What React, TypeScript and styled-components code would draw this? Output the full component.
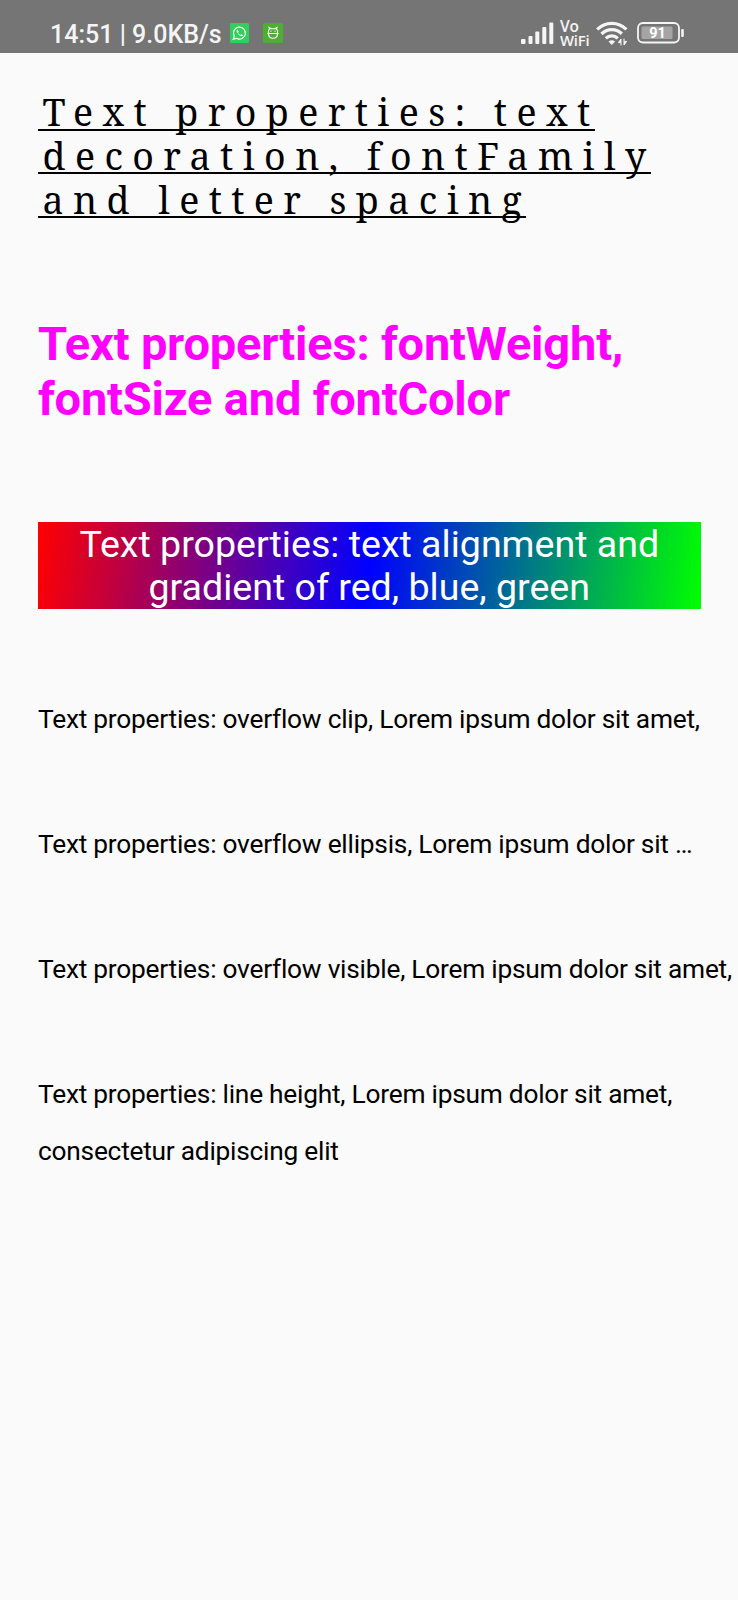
import React from "react";
import styled, { createGlobalStyle } from "styled-components";

const Global = createGlobalStyle`
  * { box-sizing: border-box; }
  body { margin: 0; background: #fafafa; }
`;
const Screen = styled.div`
  min-height: 1600px; width: 738px; overflow: hidden; background: #fafafa; color: #000;
  font-family: Roboto, sans-serif; display: flex; flex-direction: column;
`;
const StatusBar = styled.header`
  height: 53px; background: #757575; color: #f5f5f5; display: flex; align-items: center;
  justify-content: space-between; padding: 13px 54px 0 50px;
`;
const StatusGroup = styled.div<{ $gap: number }>`
  display: flex; align-items: center; gap: ${(p) => p.$gap}px;
`;
const Clock = styled.span`
  font-size: 25px; font-weight: 500; line-height: 30px; padding-top: 3px; margin-right: -6px;
`;
const Network = styled.span`
  display: flex; flex-direction: column; font-family: "Open Sans", sans-serif;
  font-size: 14.8px; line-height: 14px; font-weight: 600; width: 29px; white-space: nowrap;
  letter-spacing: -0.2px;
`;
const NetworkTop = styled.span`
  font-size: 15.5px;
`;
const Content = styled.main`
  padding: 0 37.5px 0 38px; display: flex; flex-direction: column;
`;
const Serif = styled.p`
  margin: 37.4px 0 0; font-family: "Noto Serif", "Liberation Serif", serif; font-size: 37.5px;
  line-height: 43.7px; letter-spacing: 9.4px; display: flex; flex-direction: column; align-items: flex-start;
`;
const UnderlinedLine = styled.span`
  display: block; height: 43.7px; padding-left: 4.5px; margin-right: -4.7px; white-space: nowrap;
  background: linear-gradient(#000, #000) 0 38.3px / calc(100% - 4.7px) 2px no-repeat;
`;
const Bold = styled.p`
  margin: 94.6px 0 0; color: #f0f; font-weight: 700; font-size: 47px; line-height: 55.4px;
  letter-spacing: -0.2px;
`;
const Gradient = styled.p`
  margin: 94.7px 0 0; height: 87px; padding-top: 1.2px; color: #fff; text-align: center; font-size: 37.55px; line-height: 43.7px;
  background: linear-gradient(97.5deg, #f00, #00f, #0f0);
`;
const Body = styled.p<{ $leading?: number; $top?: number }>`
  margin: ${(p) => p.$top ?? 94.2}px 0 0; font-size: 26.3px; line-height: ${(p) => p.$leading ?? 31}px;
  letter-spacing: -0.24px; white-space: nowrap;
`;

const WhatsAppBadge = () => (
  <svg width="19" height="20" viewBox="0 0 19 20">
    <rect width="19" height="20" rx="1.5" fill="#2fd159" />
    <path d="M3.300 16.200l.9-3.200a6 6 0 1 1 2.300 2.300z" fill="none" stroke="#fff" strokeWidth="1.2" />
    <path d="M7.200 6.600c-1.300 1 0 3.400 1.400 4.800s3.600 2.500 4.600 1.100l-1.900-1.300-1 .7c-1-.5-1.900-1.400-2.300-2.400l.6-1z" fill="#fff" />
  </svg>
);
const RobotBadge = () => (
  <svg width="20" height="20" viewBox="0 0 20 20">
    <rect width="20" height="20" rx="1.5" fill="#4caf32" />
    <g fill="none" stroke="#fff" strokeWidth="1.1" strokeLinecap="round">
      <path d="M5.500 10.500V8c0-1 .5-1.700 1.300-2L6.200 4.600l2 1.100h3.600l2-1.100-.6 1.400c.8.300 1.300 1 1.300 2v2.500M4.800 10.500h10.400M5.500 10.500c0 3.300 1.800 4.700 4.500 4.700s4.500-1.400 4.500-4.700" />
      <path d="M8 8v.3M12 8v.3" />
    </g>
  </svg>
);
const SignalIcon = () => (
  <svg width="33" height="22" viewBox="0 0 33 22" fill="#f5f5f5">
    <rect x="0" y="17" width="4.500" height="5" rx="1" />
    <rect x="7.500" y="14" width="4" height="8" rx="1" />
    <rect x="14.300" y="9.500" width="4" height="12.500" rx="1" />
    <rect x="21.300" y="5" width="4" height="17" rx="1" />
    <rect x="28.300" y="0.500" width="4" height="21.500" rx="1" />
  </svg>
);
const WifiIcon = styled(({ className }: { className?: string }) => (
  <svg className={className} width="32" height="25" viewBox="0 0 32 25">
    <g fill="none" stroke="#f5f5f5" strokeWidth="3.200">
      <path d="M1.200 8.400a20.500 20.500 0 0 1 29.200 0" />
      <path d="M5.500 13a14.500 14.500 0 0 1 20.600 0" />
      <path d="M9.800 17.400a8.500 8.500 0 0 1 12 0" />
    </g>
    <path d="M12.500 20.600a5 5 0 0 1 6.600 0L15.800 24z" fill="#f5f5f5" />
    <path d="M24.800 24.500v-6.500l-2.600 4h2.600M28 17.500v6.500M28 17.500v3.500h2.800" fill="none" stroke="#757575" strokeWidth="4" />
    <path d="M25 24.500v-6.500l-2.600 3.600h2.600M28 17.500v6.500l2.600-3.600H28" fill="#f5f5f5" stroke="#f5f5f5" strokeWidth="1" />
  </svg>
))`
  margin-right: 3px;
`;
const BatteryIcon = () => (
  <svg width="47" height="22" viewBox="0 0 47 22">
    <rect x="1" y="1" width="41" height="19.500" rx="5" fill="none" stroke="#f5f5f5" strokeWidth="1.800" />
    <rect x="4.500" y="4.500" width="31" height="12.500" rx="1.500" fill="#a5a5a5" />
    <rect x="44.200" y="7" width="2.600" height="8" rx="1" fill="#f5f5f5" />
    <text x="20.500" y="16" textAnchor="middle" fontFamily="Roboto, sans-serif" fontWeight="700" fontSize="14.500" fill="#fff">91</text>
  </svg>
);

export default function App() {
  return (
    <Screen>
      <Global />
      <StatusBar>
        <StatusGroup $gap={14}>
          <Clock>14:51 | 9.0KB/s</Clock>
          <WhatsAppBadge />
          <RobotBadge />
        </StatusGroup>
        <StatusGroup $gap={6.500}>
          <SignalIcon />
          <Network><NetworkTop>Vo</NetworkTop><span>WiFi</span></Network>
          <WifiIcon />
          <BatteryIcon />
        </StatusGroup>
      </StatusBar>
      <Content>
        <Serif>
          <UnderlinedLine>Text properties: text</UnderlinedLine>
          <UnderlinedLine>decoration, fontFamily</UnderlinedLine>
          <UnderlinedLine>and letter spacing</UnderlinedLine>
        </Serif>
        <Bold>Text properties: fontWeight,<br />fontSize and fontColor</Bold>
        <Gradient>Text properties: text alignment and<br />gradient of red, blue, green</Gradient>
        <Body $top={95}>Text properties: overflow clip, Lorem ipsum dolor sit amet,</Body>
        <Body>Text properties: overflow ellipsis, Lorem ipsum dolor sit …</Body>
        <Body>Text properties: overflow visible, Lorem ipsum dolor sit amet,</Body>
        <Body $leading={56.400} $top={81.500}>Text properties: line height, Lorem ipsum dolor sit amet,<br />consectetur adipiscing elit</Body>
      </Content>
    </Screen>
  );
}
